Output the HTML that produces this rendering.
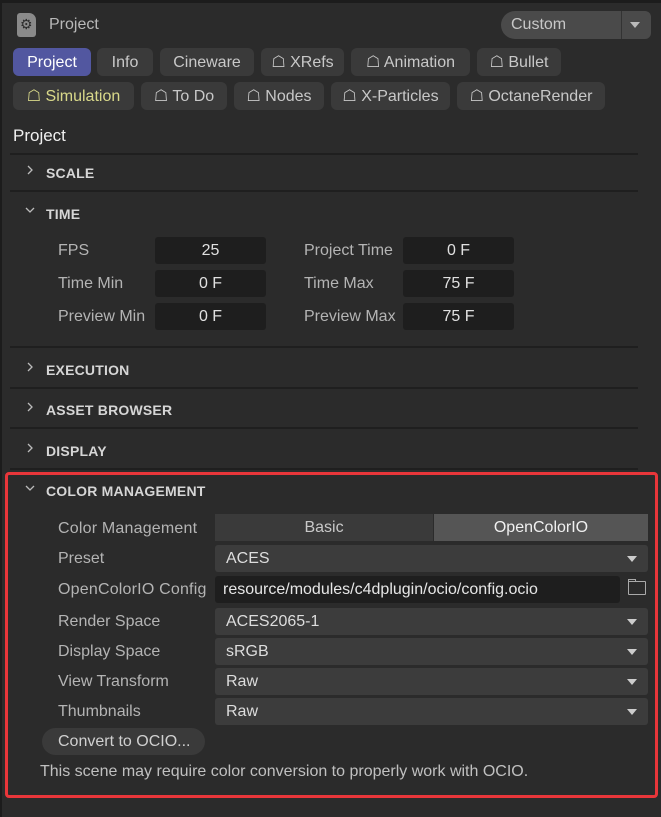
<!DOCTYPE html>
<html><head><meta charset="utf-8"><style>
*{box-sizing:border-box;margin:0;padding:0}
body{width:661px;height:817px;background:#2b2b2b;font-family:"Liberation Sans",sans-serif;color:#c8c8c8;position:relative;overflow:hidden;font-size:15px}
.a{position:absolute}
.tab{position:absolute;height:28px;background:#3a3a3a;border-radius:6px;color:#c8c8c8;font-size:16px;line-height:29px;text-align:center;white-space:nowrap}
.sep{position:absolute;left:10px;width:628px;height:2px;background:#1f1f1f}
.hd{position:absolute;left:46px;font-weight:bold;font-size:14px;color:#d6d6d6;letter-spacing:0.2px}
.ch{position:absolute;left:24px;width:12px;height:12px}
.lbl{position:absolute;font-size:16px;color:#b4b4b4;white-space:nowrap}
.num{position:absolute;width:111px;height:27px;background:#1e1e1e;border-radius:3px;text-align:center;line-height:27px;color:#e0e0e0;font-size:16px}
.dd{position:absolute;left:215px;width:433px;height:27px;background:#3c3c3c;border-radius:3px;line-height:27px;padding-left:11px;color:#ddd;font-size:16px}
.dd:after{content:"";position:absolute;right:11px;top:11px;border-left:5px solid transparent;border-right:5px solid transparent;border-top:6px solid #ccc}
</style></head><body>
<div class="a" style="left:0;top:0;width:2px;height:817px;background:#1c1c1c"></div>
<div class="a" style="left:0;top:0;width:661px;height:3px;background:#1c1c1c"></div>
<div class="a" style="left:17px;top:13px;width:19px;height:24px;background:#8a8a8a;border-radius:3px 7px 3px 3px"></div>
<div class="a" style="left:20px;top:16px;font-size:14px;color:#2b2b2b">⚙</div>
<div class="a" style="left:49px;top:16px;font-size:16px;color:#b8b8b8">Project</div>
<div class="a" style="left:501px;top:11px;width:150px;height:28px;background:#4a4a4a;border-radius:14px 6px 6px 14px"></div>
<div class="a" style="left:621px;top:11px;width:1px;height:28px;background:#333"></div>
<div class="a" style="left:511px;top:16px;font-size:16px;color:#c8c8c8">Custom</div>
<div class="a" style="left:630px;top:22px;border-left:5px solid transparent;border-right:5px solid transparent;border-top:6px solid #bbb"></div>

<div class="tab" style="left:13px;top:48px;width:78px;background:#5257a0;color:#fff">Project</div>
<div class="tab" style="left:97px;top:48px;width:56px">Info</div>
<div class="tab" style="left:160px;top:48px;width:94px">Cineware</div>
<div class="tab" style="left:261px;top:48px;width:83px">☖ XRefs</div>
<div class="tab" style="left:351px;top:48px;width:119px">☖ Animation</div>
<div class="tab" style="left:477px;top:48px;width:84px">☖ Bullet</div>
<div class="tab" style="left:13px;top:82px;width:121px;color:#d9d98a">☖ Simulation</div>
<div class="tab" style="left:141px;top:82px;width:86px">☖ To Do</div>
<div class="tab" style="left:234px;top:82px;width:90px">☖ Nodes</div>
<div class="tab" style="left:331px;top:82px;width:119px">☖ X-Particles</div>
<div class="tab" style="left:457px;top:82px;width:148px">☖ OctaneRender</div>

<div class="a" style="left:13px;top:126px;font-size:17px;color:#f0f0f0">Project</div>
<div class="sep" style="top:153px"></div>
<svg class="ch" style="top:164px" viewBox="0 0 12 12"><path d="M4 2l4 4-4 4" fill="none" stroke="#bbb" stroke-width="1.3"/></svg><div class="hd" style="top:165px">SCALE</div>
<div class="sep" style="top:190px"></div>
<svg class="ch" style="top:204px" viewBox="0 0 12 12"><path d="M2 4l4 4 4-4" fill="none" stroke="#bbb" stroke-width="1.3"/></svg><div class="hd" style="top:206px">TIME</div>

<div class="lbl" style="left:58px;top:242px">FPS</div><div class="num" style="left:155px;top:237px">25</div>
<div class="lbl" style="left:304px;top:242px">Project Time</div><div class="num" style="left:403px;top:237px">0 F</div>
<div class="lbl" style="left:58px;top:275px">Time Min</div><div class="num" style="left:155px;top:270px">0 F</div>
<div class="lbl" style="left:304px;top:275px">Time Max</div><div class="num" style="left:403px;top:270px">75 F</div>
<div class="lbl" style="left:58px;top:308px">Preview Min</div><div class="num" style="left:155px;top:303px">0 F</div>
<div class="lbl" style="left:304px;top:308px">Preview Max</div><div class="num" style="left:403px;top:303px">75 F</div>

<div class="sep" style="top:346px"></div>
<svg class="ch" style="top:361px" viewBox="0 0 12 12"><path d="M4 2l4 4-4 4" fill="none" stroke="#bbb" stroke-width="1.3"/></svg><div class="hd" style="top:362px">EXECUTION</div>
<div class="sep" style="top:387px"></div>
<svg class="ch" style="top:401px" viewBox="0 0 12 12"><path d="M4 2l4 4-4 4" fill="none" stroke="#bbb" stroke-width="1.3"/></svg><div class="hd" style="top:402px">ASSET BROWSER</div>
<div class="sep" style="top:427px"></div>
<svg class="ch" style="top:442px" viewBox="0 0 12 12"><path d="M4 2l4 4-4 4" fill="none" stroke="#bbb" stroke-width="1.3"/></svg><div class="hd" style="top:443px">DISPLAY</div>
<div class="sep" style="top:468px"></div>

<div class="a" style="left:5px;top:472px;width:653px;height:326px;border:3px solid #e8363a;border-radius:4px"></div>
<svg class="ch" style="top:482px" viewBox="0 0 12 12"><path d="M2 4l4 4 4-4" fill="none" stroke="#bbb" stroke-width="1.3"/></svg><div class="hd" style="top:483px">COLOR MANAGEMENT</div>

<div class="lbl" style="left:58px;top:520px;letter-spacing:0.2px">Color Management</div>
<div class="a" style="left:215px;top:514px;width:218px;height:27px;background:#3a3a3a;text-align:center;line-height:28px;font-size:16px;color:#c8c8c8">Basic</div>
<div class="a" style="left:434px;top:514px;width:214px;height:27px;background:#555;text-align:center;line-height:28px;font-size:16px;color:#f0f0f0">OpenColorIO</div>
<div class="lbl" style="left:58px;top:550px">Preset</div><div class="dd" style="top:545px">ACES</div>
<div class="lbl" style="left:58px;top:581px;letter-spacing:0.2px">OpenColorIO Config</div>
<div class="a" style="left:215px;top:576px;width:405px;height:27px;background:#1e1e1e;border-radius:3px;line-height:28px;padding-left:8px;font-size:16px;color:#e6e6e6">resource/modules/c4dplugin/ocio/config.ocio</div>
<div class="a" style="left:628px;top:581px;width:18px;height:14px;border:1.5px solid #aaa;border-radius:1px"></div>
<div class="a" style="left:628px;top:579px;width:8px;height:3px;border:1.5px solid #aaa;border-bottom:none"></div>
<div class="lbl" style="left:58px;top:613px">Render Space</div><div class="dd" style="top:608px">ACES2065-1</div>
<div class="lbl" style="left:58px;top:643px">Display Space</div><div class="dd" style="top:638px">sRGB</div>
<div class="lbl" style="left:58px;top:673px">View Transform</div><div class="dd" style="top:668px">Raw</div>
<div class="lbl" style="left:58px;top:703px">Thumbnails</div><div class="dd" style="top:698px">Raw</div>
<div class="a" style="left:42px;top:728px;width:163px;height:27px;background:#3a3a3a;border-radius:14px;line-height:28px;padding-left:16px;font-size:16px;color:#d0d0d0">Convert to OCIO...</div>
<div class="lbl" style="left:40px;top:763px;color:#c0c0c0">This scene may require color conversion to properly work with OCIO.</div>
</body></html>
